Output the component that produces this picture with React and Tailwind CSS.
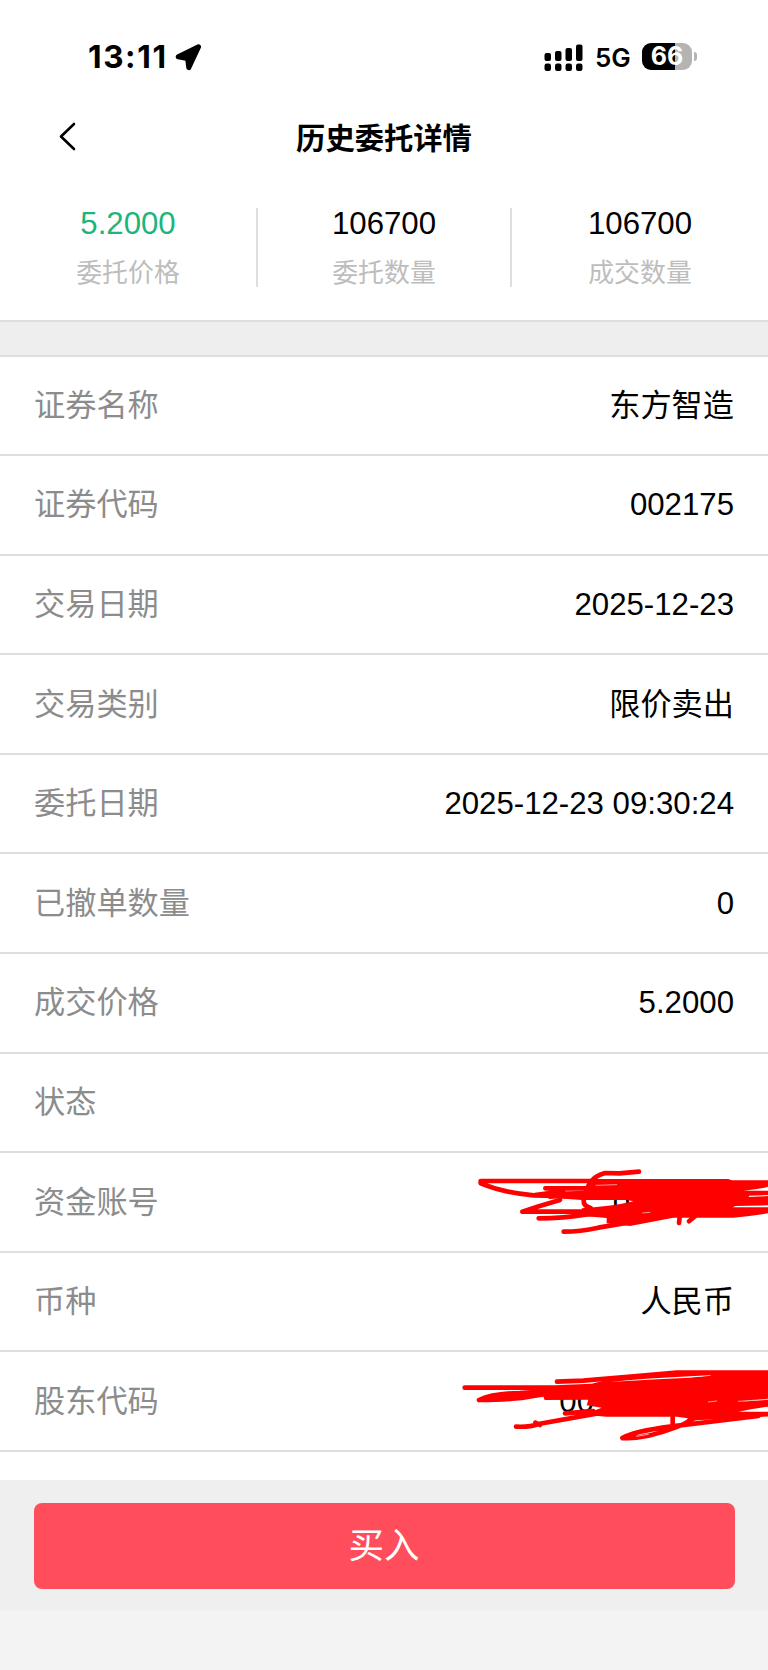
const summary = [
  { value: '5.2000', label: '委托价格', color: 'text-[#1cb57c]' },
  { value: '106700', label: '委托数量', color: 'text-black' },
  { value: '106700', label: '成交数量', color: 'text-black' },
];

const rows = [
  { label: '证券名称', value: '东方智造' },
  { label: '证券代码', value: '002175' },
  { label: '交易日期', value: '2025-12-23' },
  { label: '交易类别', value: '限价卖出' },
  { label: '委托日期', value: '2025-12-23 09:30:24' },
  { label: '已撤单数量', value: '0' },
  { label: '成交价格', value: '5.2000' },
  { label: '状态', value: '' },
  { label: '资金账号', value: '0', mark: 'account' },
  { label: '币种', value: '人民币' },
  { label: '股东代码', value: '00', mark: 'holder' },
];

function AccountScribble() {
  return (
    <svg className="absolute right-0 top-[1px] h-[100px] w-[308px]" viewBox="0 0 924 300" fill="none" stroke="#ff0000" strokeWidth="14" strokeLinecap="round" strokeLinejoin="round">
      <path d="M537 53 L478 58 L435 57 Q405 66 394 82 Q374 110 371 140 Q370 156 392 162" />
      <path d="M400 81 H62 V88 Q130 116 221 124 L400 128" />
      <path d="M256 103 H400 M225 123 L310 112 M270 128 L400 116" />
      <path d="M300 138 Q240 155 187 173 H400" />
      <path d="M236 193 Q310 193 380 181 L450 172" />
      <path d="M311 233 Q360 233 415 221 L640 183" />
      <path d="M659 190 L657 207 M706 186 L687 202" />
      <path d="M385 75 H805 L815 79 L930 79 V96 Q910 105 850 110 H930 V123 L868 125 L866 129 L930 126 V154 L825 156 L818 160 L930 160 V177 Q880 186 820 191 H640 L510 216 L440 208 L440 192 L415 190 L370 187 L365 163 Q460 157 520 142 L500 138 H365 L250 130 L250 114 L375 110 Z" fill="#ff0000" stroke="none" />
      <path d="M408 94 L470 92 M548 177 L570 175" stroke="#ffb3b3" strokeWidth="2.5" />
    </svg>
  );
}

function HolderScribble() {
  return (
    <svg className="absolute right-0 -top-[3px] h-[110px] w-[318px]" viewBox="0 0 954 330" fill="none" stroke="#ff0000" strokeWidth="14" strokeLinecap="round" strokeLinejoin="round">
      <path d="M44 116 H430 M321 98 L400 95 L560 81 L680 71 L960 71" />
      <path d="M87 153 Q130 133 210 132 L330 124 M87 153 Q190 153 250 141 L320 130 M288 146 L430 143 M120 145 L300 133" />
      <path d="M345 193 L430 186 M198 233 Q240 235 265 225 L460 190 M256 221 L270 228" />
      <path d="M517 267 Q550 247 665 232 L925 201 M517 267 Q580 272 675 236 Q720 220 740 200 M668 205 V232" />
      <path d="M425 104 L480 90 L560 82 L680 72 H960 V149 L870 158 L960 152 V173 Q910 178 865 188 H960 V202 L740 214 L700 222 L714 208 L680 203 H470 L400 197 L455 176 L410 169 L415 152 H285 L280 124 L330 108 Z" fill="#ff0000" stroke="none" />
      <path d="M480 99 Q600 87 780 79 Q800 80 720 86 L620 91 Z" fill="#fff" stroke="none" />
      <path d="M775 159 L800 156 M865 157 L954 151 M560 262 L595 256" stroke="#ffc0c0" strokeWidth="2.5" />
    </svg>
  );
}

function StatusBar() {
  return (
    <div className="flex h-[100px] items-start justify-between pl-[88px] pr-[71px]">
      <div className="flex items-center gap-[7px] pt-[37px]">
        <span className="font-['Inter'] text-[31.5px] font-bold leading-[40px] tracking-[1.6px]">13:11</span>
        <svg className="h-[27px] w-[27px]" viewBox="0 0 27 27">
          <path d="M3.2 12.8 L23.6 2.8 L13.8 23.6 L12.6 14.6 Z" fill="#000" stroke="#000" strokeWidth="5" strokeLinejoin="round" />
        </svg>
      </div>
      <div className="flex items-center pt-[41px]">
        <svg className="h-[28px] w-[40px]" viewBox="0 0 40 28" fill="#000">
          <rect x="0.5" y="10" width="6.5" height="8" rx="2" />
          <rect x="11" y="8" width="6.5" height="10" rx="2" />
          <rect x="21.5" y="5" width="6.5" height="13" rx="2" />
          <rect x="32" y="1.6" width="6.5" height="16.4" rx="2" />
          <rect x="0.5" y="20.6" width="6.5" height="7.4" rx="2.2" />
          <rect x="11" y="20.6" width="6.5" height="7.4" rx="2.2" />
          <rect x="21.5" y="20.6" width="6.5" height="7.4" rx="2.2" />
          <rect x="32" y="20.6" width="6.5" height="7.4" rx="2.2" />
        </svg>
        <span className="ml-[11px] mt-[3px] w-[36px] font-['Inter'] text-[26px] font-semibold leading-[28px]">5G</span>
        <div className="ml-[11px] flex h-[27px] w-[50px] items-center justify-center rounded-[9px] bg-[linear-gradient(90deg,#000_66%,#b4b4b4_66%)]">
          <span className="font-['Inter'] text-[25px] font-bold leading-[27px] text-white">66</span>
        </div>
        <div className="ml-[2px] h-[9px] w-[3px] rounded-r-full bg-[#b4b4b4]" />
      </div>
    </div>
  );
}

export default function App() {
  return (
    <div className="flex h-[1670px] w-[768px] flex-col overflow-hidden bg-white font-['Liberation_Sans','Noto_Sans_CJK_SC',sans-serif] text-black" lang="zh-CN">
      <StatusBar />
      <header className="grid h-[76px] grid-cols-3 items-center">
        <svg className="mb-[3px] ml-[58px] h-[30px] w-[20px]" viewBox="0 0 20 30" fill="none" stroke="#000" strokeWidth="2.6" strokeLinecap="round" strokeLinejoin="round">
          <path d="M16 2 L3 14.5 L16 27" />
        </svg>
        <h1 className="mt-px whitespace-nowrap text-center text-[29.3px] font-bold leading-[40px]">历史委托详情</h1>
      </header>
      <section className="grid h-[144px] grid-cols-[258px_254px_256px] pt-[32px]">
        {summary.map((item, i) => (
          <div key={i} className={i < 2 ? 'h-[79px] border-r-2 border-[#dedede] text-center' : 'h-[79px] text-center'}>
            <div className={`text-[31.2px] leading-[32px] ${item.color}`}>{item.value}</div>
            <div className="mt-[13px] text-[25.9px] leading-[40px] text-[#bdbdbd]">{item.label}</div>
          </div>
        ))}
      </section>
      <div className="h-[36.5px] shrink-0 border-y-2 border-[#dedede] bg-[#eeeeee]" />
      <main className="flex h-[1123.5px] shrink-0 flex-col">
        {rows.map((row) => (
          <div key={row.label} className="relative flex h-[99.58px] items-center justify-between border-b-2 border-[#dedede] px-[34px] pt-[2px] text-[31.2px]">
            <span className="text-[#8c8c8c]">{row.label}</span>
            <span className={row.mark === 'account' ? 'mr-[104px]' : row.mark === 'holder' ? 'mr-[140px]' : ''}>{row.value}</span>
            {row.mark === 'account' && <AccountScribble />}
            {row.mark === 'holder' && <HolderScribble />}
          </div>
        ))}
      </main>
      <footer className="h-[131px] shrink-0 bg-[#efefef] px-[33.5px] pt-[22.5px]">
        <button className="flex h-[86px] w-full items-center justify-center rounded-[8px] bg-[#ff4d5c] pt-[2px] text-[35.5px] text-white">买入</button>
      </footer>
      <div className="grow bg-[#f3f3f3]" />
    </div>
  );
}
